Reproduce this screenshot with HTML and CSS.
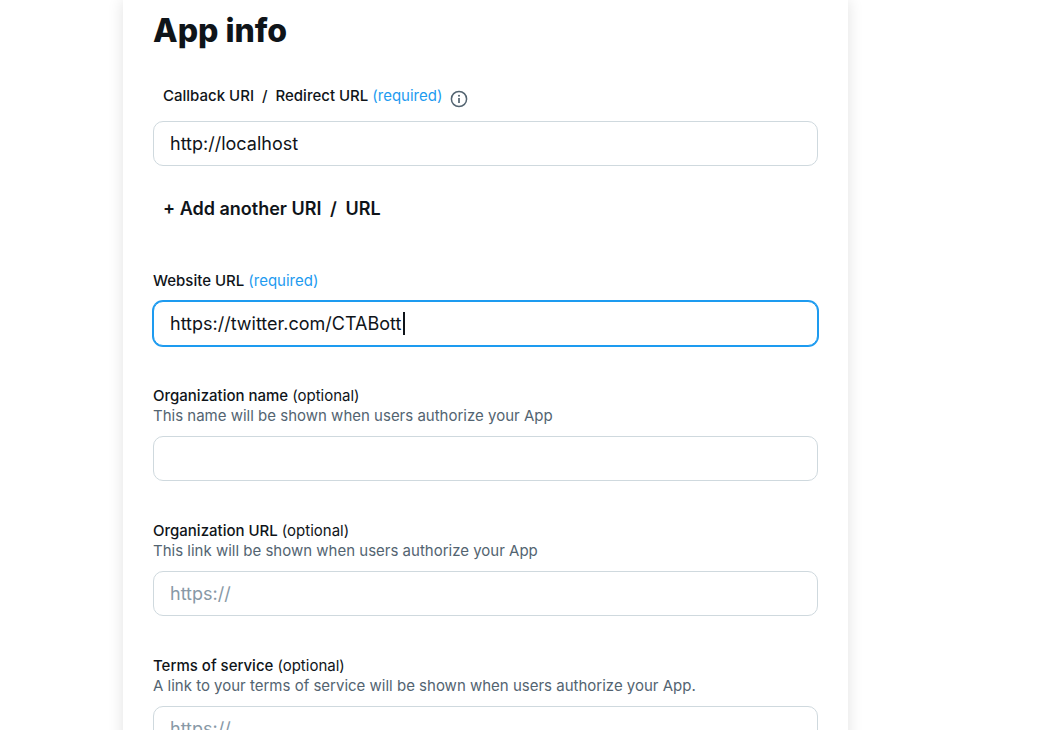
FILE: index.html
```html
<!DOCTYPE html>
<html lang="en">
<head>
<meta charset="utf-8">
<title>App info</title>
<link rel="stylesheet" href="styles.css">
</head>
<body>
<main class="card">
  <h1 class="title">App info</h1>
  <form class="form">
    <div class="field">
      <div class="label-row">
        <label class="label" for="callback">Callback URI <span class="slash">/</span> Redirect URL <span class="required">(required)</span></label>
        <button class="info" type="button" aria-label="More information">
          <svg viewBox="0 0 18 18" width="18" height="18" fill="none" stroke="currentColor" stroke-width="1.5">
            <circle cx="9" cy="9" r="7.6"/>
            <path d="M9 8v5" stroke-width="1.7"/>
            <circle cx="9" cy="5.8" r="1" fill="currentColor" stroke="none"/>
          </svg>
        </button>
      </div>
      <input class="input" id="callback" type="text" value="http://localhost">
      <button class="add" type="button">+ Add another URI <span class="slash">/</span> URL</button>
    </div>
    <div class="field">
      <label class="label" for="website">Website URL <span class="required">(required)</span></label>
      <div class="active">
        <input class="input input-active" id="website" type="text" value="https://twitter.com/CTABott">
        <span class="caret"></span>
      </div>
    </div>
    <div class="field">
      <label class="label" for="org-name">Organization name <span class="optional">(optional)</span></label>
      <p class="hint">This name will be shown when users authorize your App</p>
      <input class="input" id="org-name" type="text">
    </div>
    <div class="field">
      <label class="label" for="org-url">Organization URL <span class="optional">(optional)</span></label>
      <p class="hint">This link will be shown when users authorize your App</p>
      <input class="input" id="org-url" type="text" placeholder="https://">
    </div>
    <div class="field">
      <label class="label" for="terms">Terms of service <span class="optional">(optional)</span></label>
      <p class="hint">A link to your terms of service will be shown when users authorize your App.</p>
      <input class="input" id="terms" type="text" placeholder="https://">
    </div>
  </form>
</main>
</body>
</html>
```
FILE: styles.css
```css
* {
  box-sizing: border-box;
}

html {
  overflow: hidden;
}

body {
  margin: 0;
  padding: 0 189px 0 123px;
  background: #fff;
  color: #0f1419;
  font-family: Inter, "Liberation Sans", sans-serif;
  font-size: 15px;
  line-height: 20px;
}

.card {
  padding: 11px 30px 40px;
  background: #fff;
  box-shadow: 0 0 15px rgba(0, 0, 0, 0.12);
}

.title {
  margin: 0 0 35px;
  font-size: 32px;
  line-height: 40px;
  font-weight: 800;
}

.form {
  display: flex;
  flex-direction: column;
  gap: 40px;
}

.field {
  display: flex;
  flex-direction: column;
  align-items: flex-start;
}

.label {
  font-weight: 500;
}

.label-row {
  display: flex;
  align-items: flex-start;
  gap: 8px;
  padding: 0 10px 3px;
}

.slash {
  margin: 0 4px;
}

.required {
  color: #1d9bf0;
  font-weight: 400;
}

.optional {
  font-weight: 400;
}

.info {
  padding: 4px 0 0;
  border: 0;
  background: none;
  color: #536471;
  line-height: 0;
}

.hint {
  margin: 0;
  color: #536471;
}

.input {
  width: 100%;
  height: 45px;
  margin-top: 10px;
  padding: 0 16px;
  border: 1px solid #cfd9de;
  border-radius: 10px;
  outline: none;
  background: #fff;
  color: #0f1419;
  font: inherit;
  font-size: 18px;
}

.input::placeholder {
  color: #8899a6;
  opacity: 1;
}

.active {
  position: relative;
  width: 100%;
}

.input-active {
  display: block;
  border-color: #1d9bf0;
  box-shadow: 0 0 0 1px #1d9bf0;
}

.caret {
  position: absolute;
  top: 21px;
  left: 250px;
  width: 2px;
  height: 23px;
  background: #0f1419;
}

.add {
  height: 45px;
  margin-top: 20px;
  padding: 0 10px;
  border: 0;
  background: none;
  color: #0f1419;
  font: inherit;
  font-size: 18px;
  font-weight: 600;
}
```
